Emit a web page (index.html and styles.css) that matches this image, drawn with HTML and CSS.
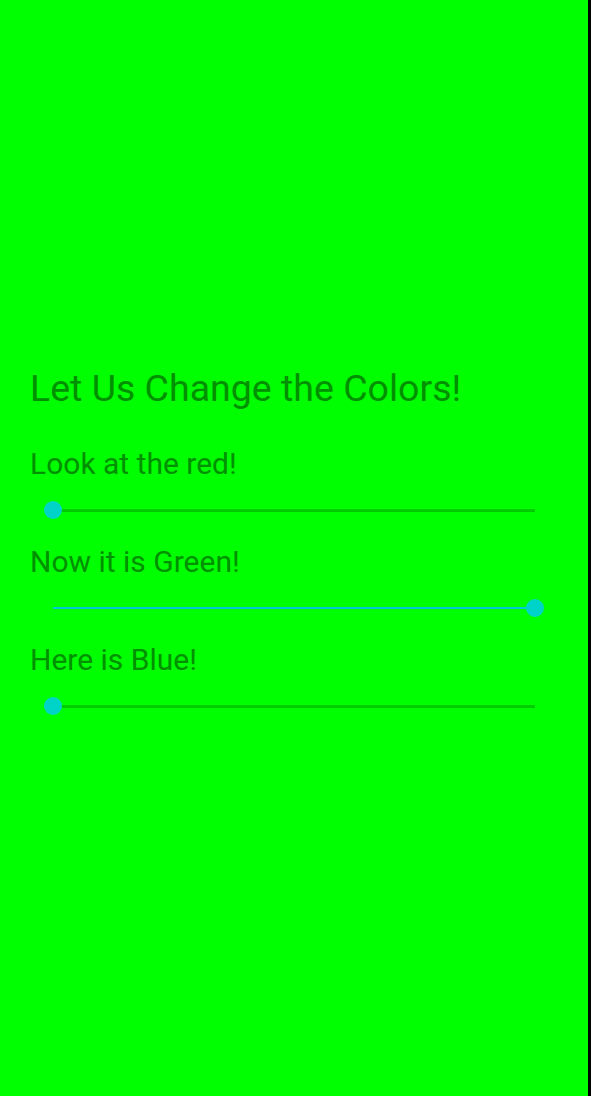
FILE: index.html
```html
<!DOCTYPE html>
<html>
<head>
<meta charset="utf-8">
<link rel="stylesheet" href="styles.css">
</head>
<body>
<div class="screen">
  <div class="content">
    <h1 class="title">Let Us Change the Colors!</h1>
    <div class="block">
      <p class="label">Look at the red!</p>
      <div class="slider"><div class="track"></div><div class="thumb start"></div></div>
    </div>
    <div class="block">
      <p class="label">Now it is Green!</p>
      <div class="slider"><div class="track active"></div><div class="thumb end"></div></div>
    </div>
    <div class="block">
      <p class="label">Here is Blue!</p>
      <div class="slider"><div class="track"></div><div class="thumb start"></div></div>
    </div>
  </div>
</div>
</body>
</html>
```

FILE: styles.css
```css
html, body {
  margin: 0;
  padding: 0;
  background: #000;
}
.screen {
  width: 588px;
  height: 1096px;
  background: #00ff00;
  display: flex;
  flex-direction: column;
  font-family: Roboto, "Noto Sans", sans-serif;
  color: #009000;
}
.content {
  padding: 366px 0 0 30px;
}
.title {
  margin: 0;
  font-size: 37.5px;
  font-weight: 400;
  line-height: 44px;
}
.block {
  display: flex;
  flex-direction: column;
}
.title + .block {
  margin-top: 36px;
}
.label {
  margin: 0;
  font-size: 30px;
  line-height: 36px;
}
.slider {
  position: relative;
  width: 500px;
  margin-left: 14px;
  height: 56px;
  margin-bottom: 6px;
  display: flex;
  align-items: center;
  padding: 0 9px;
  box-sizing: border-box;
}
.track {
  flex: 1;
  height: 3px;
  background: #00cc00;
}
.track.active {
  background: #00c8d8;
  height: 2px;
}
.thumb {
  position: absolute;
  top: 50%;
  width: 18px;
  height: 18px;
  margin-top: -9px;
  border-radius: 50%;
  background: #00d4c8;
}
.thumb.start { left: 0; }
.thumb.end { right: 0; }
```
